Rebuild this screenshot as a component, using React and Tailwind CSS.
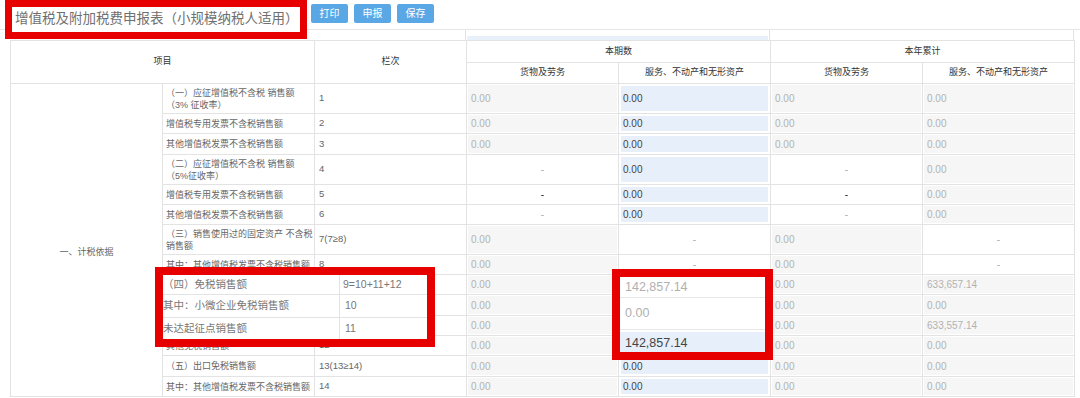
import React from 'react'

const bd = 'border border-[#e3e3e3]'

// 行数据：c 为四个数据列 [本期货物, 本期服务, 本年货物, 本年服务]
// hide: 被标注框完全盖住的行，文字不重复画
const rows = [
  { label: ['（一）应征增值税不含税 销售额', '（3% 征收率）'], no: '1', h: 'h-[30px]', c: ['g', 'b', 'g', 'g'] },
  { label: ['增值税专用发票不含税销售额'], no: '2', h: 'h-[20px]', c: ['g', 'b', 'g', 'g'] },
  { label: ['其他增值税发票不含税销售额'], no: '3', h: 'h-[21px]', c: ['g', 'b', 'g', 'g'] },
  { label: ['（二）应征增值税不含税 销售额', '（5%征收率）'], no: '4', h: 'h-[30px]', c: ['d', 'b', 'd', 'g'] },
  { label: ['增值税专用发票不含税销售额'], no: '5', h: 'h-[20px]', c: ['D', 'b', 'D', 'g'] },
  { label: ['其他增值税发票不含税销售额'], no: '6', h: 'h-[20px]', c: ['d', 'b', 'd', 'g'] },
  { label: ['（三）销售使用过的固定资产 不含税', '销售额'], no: '7(7≥8)', h: 'h-[30px]', c: ['g', 'd', 'g', 'd'] },
  { label: ['其中：其他增值税发票不含税销售额'], no: '8', h: 'h-[20px]', c: ['g', 'd', 'g', 'd'] },
  { label: [''], no: '', h: 'h-[20px]', c: ['g', ['g', ''], 'g', ['g', '633,657.14']] },
  { label: [''], no: '', h: 'h-[21px]', c: ['g', ['g', ''], 'g', 'g'] },
  { label: [''], no: '', h: 'h-[20px]', c: ['g', ['g', ''], 'g', ['g', '633,557.14']] },
  { label: ['其他免税销售额'], no: '12', h: 'h-[20px]', c: ['g', ['b', ''], 'g', 'g'] },
  { label: ['（五）出口免税销售额'], no: '13(13≥14)', h: 'h-[21px]', c: ['g', 'b', 'g', 'g'] },
  { label: ['其中：其他增值税发票不含税销售额'], no: '14', h: 'h-[20px]', c: ['g', 'b', 'g', 'g'] },
]

function Val({ v }) {
  const [type, text] = Array.isArray(v) ? v : [v, '0.00']
  if (type === 'b') {
    return (
      <td className={`${bd} bg-[#e7effa] shadow-[inset_0_0_0_2px_white] pl-[4px] text-[10px] text-[#444]`}>{text}</td>
    )
  }
  if (type === 'd' || type === 'D') {
    return (
      <td className={`${bd} bg-white text-center text-[10px] ${type === 'D' ? 'text-[#222]' : 'text-[#aaa]'}`}>-</td>
    )
  }
  return (
    <td className={`${bd} bg-[#f6f6f6] shadow-[inset_0_0_0_1px_white] pl-[4px] text-[10px] text-[#b2b2b2]`}>{text}</td>
  )
}

export default function App() {
  return (
    <div className="relative w-[1080px] h-[398px] overflow-hidden bg-white font-['Liberation_Sans','Noto_Sans_CJK_SC',sans-serif]">
      {/* 顶部按钮栏 */}
      <div className="h-[30px] border-b border-[#e6e6e6] flex items-start gap-[6px] pl-[311px] pt-[4px]">
        {['打印', '申报', '保存'].map((b) => (
          <div key={b} className="w-[37px] h-[19px] rounded-[2px] bg-[#5aa7e6] text-white text-[10px] flex items-center justify-center">
            {b}
          </div>
        ))}
      </div>

      <div className="h-[10px] flex">
        <div className="ml-[465px] w-[305px] border-x border-[#e3e3e3] flex items-end px-[1px]">
          <div className="h-[4px] w-full bg-[#e8f0fa]"></div>
        </div>
        <div className="w-[304px] border-r border-[#e3e3e3]"></div>
      </div>

      <table className="ml-[10px] w-[1064px] table-fixed border-collapse text-[#666]">
        <colgroup>
          {[0, 1, 2, 3, 4, 5, 6].map((i) => <col key={i} className="w-[152px]" />)}
        </colgroup>
        <thead>
          <tr className="h-[22px] text-[9px] text-[#333]">
            <th colSpan={2} rowSpan={2} className={`${bd} font-normal`}>项目</th>
            <th rowSpan={2} className={`${bd} font-normal`}>栏次</th>
            <th colSpan={2} className={`${bd} font-normal`}>本期数</th>
            <th colSpan={2} className={`${bd} font-normal`}>本年累计</th>
          </tr>
          <tr className="h-[21px] text-[9px] text-[#333]">
            <th className={`${bd} font-normal`}>货物及劳务</th>
            <th className={`${bd} font-normal`}>服务、不动产和无形资产</th>
            <th className={`${bd} font-normal`}>货物及劳务</th>
            <th className={`${bd} font-normal`}>服务、不动产和无形资产</th>
          </tr>
        </thead>
        <tbody>
          {rows.map((r, i) => (
            <tr key={i} className={r.h}>
              {i === 0 && (
                <td rowSpan={14} className={`${bd} align-top text-center pt-[162px] text-[9px] leading-[12px]`}>
                  一、计税依据
                </td>
              )}
              <td className={`${bd} px-[3px] text-[9px] leading-[12px] whitespace-nowrap overflow-hidden`}>
                {r.label.map((l, k) => (
                  <div key={k}>{l}</div>
                ))}
              </td>
              <td className={`${bd} pl-[4px] text-[9.5px]`}>{r.no}</td>
              {r.c.map((v, k) => (
                <Val key={k} v={v} />
              ))}
            </tr>
          ))}
        </tbody>
      </table>

      {/* 标注：标题 */}
      <div className="absolute left-[5px] top-0 w-[302px] h-[39px] border-[7px] border-[#e60000] bg-white flex items-center pl-[3px] text-[13.5px] text-[#707070] whitespace-nowrap">
        增值税及附加税费申报表（小规模纳税人适用）
      </div>

      {/* 标注：左侧放大 */}
      <div className="absolute left-[155px] top-[267px] w-[280px] h-[80px] border-[8px] border-[#e60000] bg-white text-[10.5px] text-[#777] overflow-hidden">
        <div className="flex h-[20px] border-b border-[#e3e3e3]">
          <div className="w-[177px] border-r border-[#e3e3e3] flex items-center">（四）免税销售额</div>
          <div className="flex-1 flex items-center pl-[3px]">9=10+11+12</div>
        </div>
        <div className="flex h-[23px] border-b border-[#e3e3e3]">
          <div className="w-[177px] border-r border-[#e3e3e3] flex items-center">其中：小微企业免税销售额</div>
          <div className="flex-1 flex items-center pl-[5px]">10</div>
        </div>
        <div className="flex h-[21px]">
          <div className="w-[177px] border-r border-[#e3e3e3] flex items-center">未达起征点销售额</div>
          <div className="flex-1 flex items-center pl-[5px]">11</div>
        </div>
      </div>

      {/* 标注：右侧放大 */}
      <div className="absolute left-[612px] top-[269px] w-[161px] h-[91px] border-[8px] border-[#e60000] bg-white text-[12.5px] overflow-hidden">
        <div className="h-[21px] border-b border-[#e6e6e6] flex items-center pl-[5px] text-[#b0b0b0]">142,857.14</div>
        <div className="h-[32px] border-b border-[#e6e6e6] flex items-center pl-[5px] text-[#b0b0b0]">0.00</div>
        <div className="h-[22px] mt-[2px] bg-[#e7effa] flex items-center pl-[5px] text-[#444]">142,857.14</div>
      </div>
    </div>
  )
}
